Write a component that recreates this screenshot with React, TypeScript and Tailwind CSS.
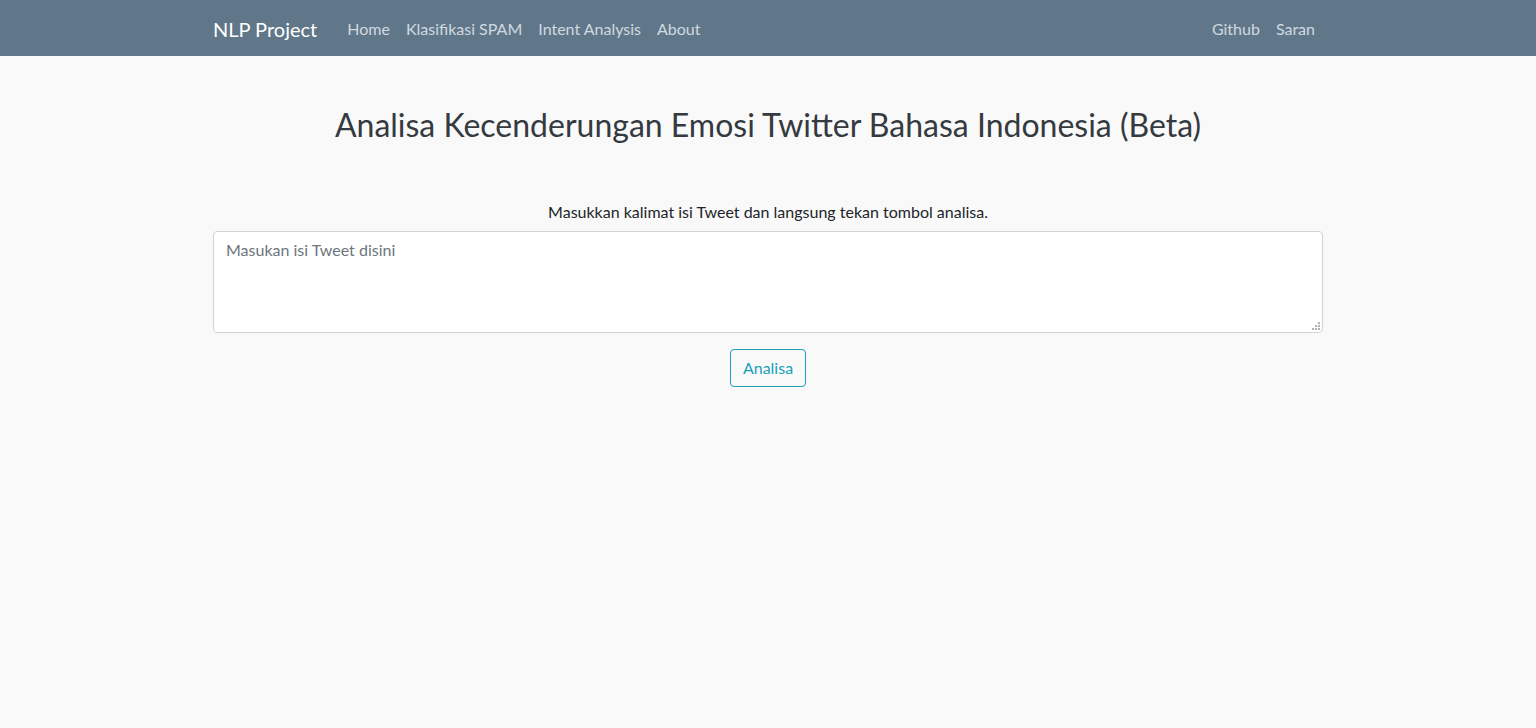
import React from "react";

export default function App() {
  const font = { fontFamily: 'Lato, "Noto Sans", sans-serif' };
  return (
    <div className="min-h-[728px] bg-[#f9f9f9] text-[#212529]" style={font}>
      <nav className="h-[56px] bg-[#607789]">
        <div className="mx-auto flex h-full w-[1140px] items-center px-[15px] pt-[2px]">
          <span className="mr-[22px] text-[20px] text-white">NLP Project</span>
          <div className="flex text-[16px] text-[#d0d9e0]">
            <span className="px-[8px]">Home</span>
            <span className="px-[8px]">Klasifikasi SPAM</span>
            <span className="px-[8px]">Intent Analysis</span>
            <span className="px-[8px]">About</span>
          </div>
          <div className="ml-auto flex text-[16px] text-[#d0d9e0]">
            <span className="px-[8px]">Github</span>
            <span className="px-[8px]">Saran</span>
          </div>
        </div>
      </nav>
      <div className="mx-auto w-[1140px] px-[15px]">
        <h2 className="mt-[50px] text-center text-[32px] leading-[1.2] text-[#343a40]">
          Analisa Kecenderungan Emosi Twitter Bahasa Indonesia (Beta)
        </h2>
        <p className="mt-[56px] text-center text-[16px] leading-[24px]">
          Masukkan kalimat isi Tweet dan langsung tekan tombol analisa.
        </p>
        <div className="relative mt-[7px]">
          <textarea
            className="block h-[102px] w-full resize-none rounded-[4px] border border-[#ced4da] bg-white px-[12px] py-[6px] text-[16px] leading-[24px] placeholder:text-[#6c757d]"
            placeholder="Masukan isi Tweet disini"
          />
          <svg className="absolute bottom-[3px] right-[3px]" width="8" height="8" viewBox="0 0 8 8">
            <g fill="#b0b0b0">
              <rect x="6" y="0" width="2" height="2" />
              <rect x="3" y="3" width="2" height="2" />
              <rect x="6" y="3" width="2" height="2" />
              <rect x="0" y="6" width="2" height="2" />
              <rect x="3" y="6" width="2" height="2" />
              <rect x="6" y="6" width="2" height="2" />
            </g>
          </svg>
        </div>
        <div className="mt-[16px] flex justify-center">
          <button className="h-[38px] rounded-[4px] border border-[#17a2b8] px-[12px] text-[16px] text-[#17a2b8]">
            Analisa
          </button>
        </div>
      </div>
    </div>
  );
}
